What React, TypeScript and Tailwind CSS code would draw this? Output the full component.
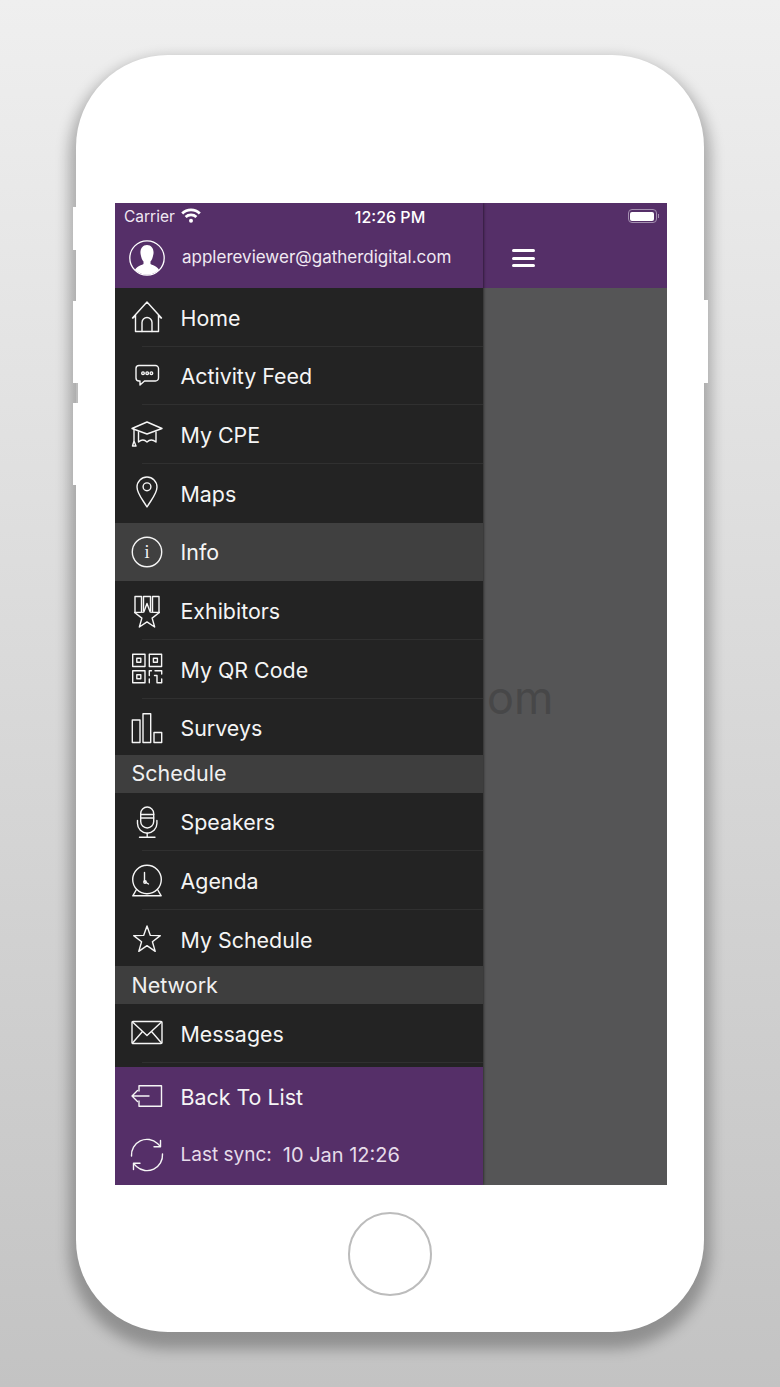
import React from "react";

const S = ({ children }: { children: React.ReactNode }) => (
  <svg viewBox="0 0 36 36" className="w-9 h-9 shrink-0" fill="none" stroke="#f6f6f6" strokeWidth="1.4" strokeLinejoin="round" strokeLinecap="round">
    {children}
  </svg>
);

const star = (cx: number, cy: number, R: number, r: number) => {
  const pts: string[] = [];
  for (let i = 0; i < 10; i++) {
    const a = (-90 + i * 36) * (Math.PI / 180);
    const q = i % 2 === 0 ? R : r;
    pts.push(`${(cx + q * Math.cos(a)).toFixed(2)},${(cy + q * Math.sin(a)).toFixed(2)}`);
  }
  return pts.join(" ");
};

const Home = () => (
  <S>
    <path d="M3.5 19 L18 3 L32.5 19 M4 19 L6.5 17 M32 19 L29.5 17" />
    <path d="M6.5 16.5 V32.5 H29.5 V16.5" />
    <path d="M13 32.5 V23.5 a5 5 0 0 1 10 0 V32.5" />
  </S>
);
const Feed = () => (
  <S>
    <path d="M10 7.5 H26.5 a3 3 0 0 1 3 3 v9.5 a3 3 0 0 1 -3 3 H15.5 l-4.5 4 v-4 h-1 a3 3 0 0 1 -3 -3 v-9.5 a3 3 0 0 1 3 -3 z" />
    <circle cx="14" cy="15.2" r="1.3" />
    <circle cx="18.2" cy="15.2" r="1.3" />
    <circle cx="22.4" cy="15.2" r="1.3" />
  </S>
);
const Cap = () => (
  <S>
    <path d="M3 11.5 L18 5 L33 11.5 L18 17 Z" />
    <path d="M9.5 15 V25 Q14 21 18 25 Q22 21 27 25 V15" />
    <path d="M5 12.5 V24 M3.5 29 L5 24 L7 29 Z" />
  </S>
);
const Pin = () => (
  <S>
    <path d="M18 32 C13.5 24.5 8 18.5 8 12 a10 10 0 0 1 20 0 C28 18.5 22.5 24.5 18 32 z" />
    <circle cx="18" cy="11.8" r="3.9" />
  </S>
);
const Info = () => (
  <S>
    <circle cx="18" cy="18" r="14.7" />
    <text x="18" y="24" textAnchor="middle" fontSize="18" fontFamily="'Liberation Serif', serif" fill="#f6f6f6" stroke="none">i</text>
  </S>
);
const Exhibitors = () => (
  <S>
    <path d="M6 19.5 V3.5 H12.5 V19.2" />
    <path d="M14.5 18 V3.5 H21.5 V18" />
    <path d="M30 19.5 V3.5 H23.5 V19.2" />
    <polygon points={star(18, 23.5, 13, 5.4)} fill="#232323" />
  </S>
);
const Qr = () => (
  <S>
    <rect x="3.7" y="3.2" width="12.3" height="12.3" />
    <rect x="20.3" y="3.2" width="12.3" height="12.3" />
    <rect x="3.7" y="19.7" width="12.3" height="12" />
    <rect x="7.8" y="7.3" width="4" height="4" />
    <rect x="24.4" y="7.3" width="4" height="4" />
    <rect x="7.8" y="23.7" width="4" height="4" />
    <path d="M20.3 24.5 V19.7 H22.5 M26 19.7 H32.7 V23 M20.3 28 V31.7 M25.5 24.5 H28 V31.7 H32.7 V28" />
  </S>
);
const Bars = () => (
  <S>
    <rect x="3.3" y="10" width="7.7" height="22.5" />
    <rect x="14" y="3.8" width="7.7" height="28.7" />
    <rect x="25" y="22.5" width="7.7" height="10" />
  </S>
);
const Mic = () => (
  <S>
    <rect x="11.7" y="3" width="13" height="21" rx="6.5" />
    <path d="M11.7 10.5 H24.7 M11.7 14 H24.7" />
    <path d="M8.5 16.5 V19.5 a9.7 9.7 0 0 0 19.4 0 V16.5" />
    <path d="M18.2 29 V33 M10.5 33.2 H26" />
  </S>
);
const Clock = () => (
  <S>
    <circle cx="18" cy="16.5" r="14.3" />
    <path d="M15.5 9.5 V18.5 L19.5 21" />
    <circle cx="16" cy="19" r="1.2" />
    <path d="M7.5 26.5 L3.8 32.8 H32.2 L28.5 26.5" />
  </S>
);
const Star = () => (
  <S>
    <polygon points={star(18, 19, 14, 5.7)} />
  </S>
);
const Mail = () => (
  <S>
    <rect x="3" y="6.5" width="30" height="22" rx="1" />
    <path d="M3.5 7 L18 20.5 L32.5 7 M3.5 28 L13.5 16.5 M32.5 28 L22.5 16.5" />
  </S>
);
const Back = () => (
  <S>
    <path d="M10 13 V7.7 H32.5 V28.3 H10 V23" />
    <path d="M3 18 H20 M8.5 12.5 L3 18 L8.5 23.5" />
  </S>
);
const Sync = () => (
  <S>
    <path d="M2.5 19 A15.5 15.5 0 0 1 28.5 6.5 L31 9" />
    <path d="M33.5 17 A15.5 15.5 0 0 1 7.5 29.5 L5 27" />
    <path d="M31.5 3.5 V9.8 H25 M4.5 32.5 V26.2 H11" />
  </S>
);

const Row = ({ icon, label, active, last }: { icon: React.ReactNode; label: string; active?: boolean; last?: boolean }) => (
  <div className={`relative h-[58.67px] shrink-0 flex items-center pl-[14px] gap-[15.5px] text-[21.4px] text-[#f5f5f5] ${active ? "bg-[#404040]" : ""}`}>
    {icon}
    <span className="mt-[1px]">{label}</span>
    {!last && !active && <div className="absolute left-[27px] right-0 bottom-0 h-px bg-[#303030]" />}
  </div>
);

const Section = ({ label }: { label: string }) => (
  <div className="relative h-[38px] shrink-0 -mt-[2.67px] flex items-center pl-[16.5px] bg-[#3e3e3e] text-[21.5px] text-[#f0f0f0]">{label}</div>
);

export default function App() {
  return (
    <div className="w-[780px] h-[1387px] overflow-hidden flex justify-center pt-[55px] bg-gradient-to-b from-[#efefef] to-[#c3c3c3] font-['Inter','Liberation_Sans',sans-serif]">
      <div className="relative w-[628px] h-[1277px] rounded-[92px] bg-white pt-[148px] shadow-[0_10px_14px_7px_rgba(0,0,0,0.27)]">
        <div className="absolute -left-[3px] top-[152px] w-[3px] h-[43px] bg-white" />
        <div className="absolute -left-[3px] top-[246px] w-[3px] h-[82px] bg-white" />
        <div className="absolute -left-[3px] top-[348px] w-[3px] h-[82px] bg-white" />
        <div className="absolute left-0 top-[328px] w-[2px] h-[20px] bg-[#bdbdbd]" />
        <div className="absolute -right-[4px] top-[245px] w-[4px] h-[83px] bg-white" />

        <div className="ml-[39px] w-[552px] h-[982px] flex overflow-hidden">
          <div className="relative z-10 w-[368px] h-full flex flex-col shrink-0 bg-[#232323] shadow-[0_0_3px_rgba(0,0,0,0.8)]">
            <div className="h-[85px] shrink-0 bg-[#552f68] text-[#f0e9f2]">
              <div className="flex items-center h-[27px] pl-[9px] text-[15.5px]">
                <span>Carrier</span>
                <svg viewBox="0 0 20 15" className="w-[20px] h-[15px] ml-[6px] -mt-[3px]" fill="none" stroke="#ffffff" strokeWidth="2.8">
                  <path d="M1.2 5.5 a12.5 12.5 0 0 1 17.6 0" />
                  <path d="M4.6 9 a8 8 0 0 1 10.8 0" />
                  <circle cx="10" cy="12.7" r="2" fill="#ffffff" stroke="none" />
                </svg>
                <span className="ml-[154px] text-[16px] font-medium text-white whitespace-nowrap">12:26 PM</span>
              </div>
              <div className="flex items-center pl-[14px] gap-[17px] mt-[10px] text-[17px]">
                <svg viewBox="0 0 36 36" className="w-9 h-9 shrink-0">
                  <defs>
                    <clipPath id="avatarClip"><circle cx="18" cy="18" r="16.8" /></clipPath>
                  </defs>
                  <path clipPath="url(#avatarClip)" fill="#ffffff" d="M18 5 C13.5 5 11 9 11.5 13.5 C12 17 13 20 14.5 21.5 V24 C11 26 5 26.5 4 36 H32 C31 26.5 25 26 21.5 24 V21.5 C23 20 24 17 24.5 13.5 C25 9 22.5 5 18 5 Z" />
                  <circle cx="18" cy="18" r="17.2" fill="none" stroke="#ffffff" strokeWidth="1.3" />
                </svg>
                <span className="whitespace-nowrap">applereviewer@gatherdigital.com</span>
              </div>
            </div>

            <div className="flex-1 min-h-0 overflow-hidden flex flex-col">
              <Row icon={<Home />} label="Home" />
              <Row icon={<Feed />} label="Activity Feed" />
              <Row icon={<Cap />} label="My CPE" />
              <Row icon={<Pin />} label="Maps" last />
              <Row icon={<Info />} label="Info" active />
              <Row icon={<Exhibitors />} label="Exhibitors" />
              <Row icon={<Qr />} label="My QR Code" />
              <Row icon={<Bars />} label="Surveys" last />
              <Section label="Schedule" />
              <Row icon={<Mic />} label="Speakers" />
              <Row icon={<Clock />} label="Agenda" />
              <Row icon={<Star />} label="My Schedule" last />
              <Section label="Network" />
              <Row icon={<Mail />} label="Messages" />
            </div>

            <div className="h-[118px] shrink-0 bg-[#552f68] text-[#ece4ef]">
              <Row icon={<Back />} label="Back To List" last />
              <div className="h-[59px] flex items-center pl-[14px] gap-[15.5px] text-[#e6dcea]">
                <Sync />
                <span className="text-[19px]">Last sync:</span>
                <span className="-ml-[4.5px] text-[20px]">10 Jan 12:26</span>
              </div>
            </div>
          </div>

          <div className="flex-1 flex flex-col bg-[#555556]">
            <div className="h-[85px] shrink-0 bg-[#552f68]">
              <div className="flex justify-end pt-[6px] pr-[8px]">
                <div className="flex items-center">
                  <div className="w-[29px] h-[14px] rounded-[4px] border border-[#a48fb0] p-[1.5px]">
                    <div className="w-full h-full rounded-[2px] bg-white" />
                  </div>
                  <div className="w-[1.5px] h-[4px] bg-[#a48fb0] ml-[1px]" />
                </div>
              </div>
              <div className="mt-[26px] ml-[29px] w-[23px] flex flex-col gap-[4.5px]">
                <div className="h-[3px] rounded-full bg-white" />
                <div className="h-[3px] rounded-full bg-white" />
                <div className="h-[3px] rounded-full bg-white" />
              </div>
            </div>
            <div className="flex-1 flex items-center pl-[4px] pb-[78px] text-[45px] text-[#474748]">om</div>
          </div>
        </div>

        <div className="mx-auto mt-[27px] w-[84px] h-[84px] rounded-full border-2 border-[#bcbcbc]" />
      </div>
    </div>
  );
}
